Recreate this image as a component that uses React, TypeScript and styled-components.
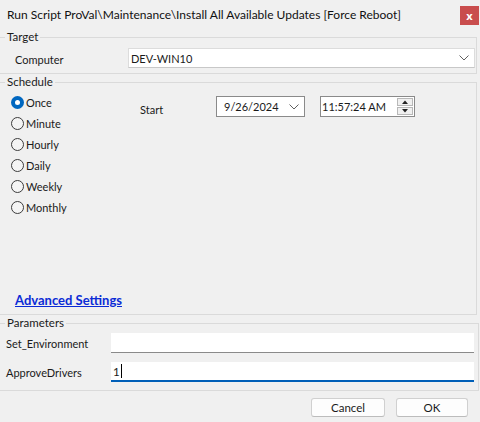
import React from "react";
import styled, { createGlobalStyle } from "styled-components";

const GlobalStyle = createGlobalStyle`
  html, body {
    margin: 0;
    padding: 0;
    background: #f0f0f0;
  }
  * {
    box-sizing: border-box;
  }
`;

const FONT = `Lato, "Noto Sans", sans-serif`;

const Window = styled.div`
  width: 480px;
  height: 422px;
  background: #f0f0f0;
  color: #1a1a1a;
  font-family: ${FONT};
  font-size: 11px;
  display: flex;
  flex-direction: column;
  overflow: hidden;
`;

const TitleBar = styled.div`
  height: 29px;
  display: flex;
  align-items: center;
  justify-content: space-between;
  padding: 0 1px 0 7px;
  font-size: 12px;
  color: #111;
`;

const CloseButton = styled.div`
  width: 19px;
  height: 19px;
  margin-top: 1px;
  background: #c94d4d;
  color: #fff;
  font-family: "Noto Sans", sans-serif;
  font-size: 11px;
  font-weight: 700;
  display: flex;
  align-items: center;
  justify-content: center;
  line-height: 1;
`;

const Group = styled.fieldset<{ $right: number }>`
  margin: 0 ${(p) => p.$right}px 0 0;
  padding: 0;
  border: 1px solid #dadada;
  border-left: none;
  min-width: 0;
`;

const Legend = styled.legend`
  margin-left: 5px;
  padding: 0 2px;
  line-height: 16px;
  font-size: 11.5px;
  color: #1a1a1a;
`;

const TargetBody = styled.div`
  display: flex;
  align-items: center;
  padding: 3px 1px 5px 15px;
`;

const FieldLabel = styled.div<{ $width: number; $offset?: number }>`
  width: ${(p) => p.$width}px;
  flex-shrink: 0;
  padding-top: ${(p) => p.$offset ?? 0}px;
  white-space: nowrap;
`;

const Combo = styled.div`
  flex: 1;
  height: 20px;
  background: #fff;
  border: 1px solid #dcdcdc;
  border-bottom-color: #c8c8c8;
  display: flex;
  align-items: center;
  justify-content: space-between;
  padding: 0 5px 0 2px;
`;

const Chevron = () => (
  <svg width="10" height="6" viewBox="0 0 10 6">
    <polyline points="0.5,0.5 5,5 9.5,0.5" fill="none" stroke="#606060" strokeWidth="1" />
  </svg>
);

const ScheduleBody = styled.div`
  height: 224px;
  display: flex;
  flex-direction: column;
  justify-content: space-between;
  padding: 2px 0 6px 0;
`;

const ScheduleTop = styled.div`
  display: flex;
`;

const RadioList = styled.div`
  width: 140px;
  padding-left: 11px;
  display: flex;
  flex-direction: column;
`;

const RadioRow = styled.div`
  height: 21px;
  display: flex;
  align-items: center;
  gap: 2px;
  font-size: 11px;
`;

const RadioCircle = styled.span<{ $checked: boolean }>`
  width: 13px;
  height: 13px;
  border-radius: 50%;
  flex-shrink: 0;
  border: ${(p) => (p.$checked ? "none" : "1px solid #3c3c3c")};
  background: ${(p) => (p.$checked ? "#0067c0" : "#f4f4f4")};
  display: flex;
  align-items: center;
  justify-content: center;
  &::after {
    content: "";
    display: ${(p) => (p.$checked ? "block" : "none")};
    width: 5px;
    height: 5px;
    border-radius: 50%;
    background: #fff;
  }
`;

const StartArea = styled.div`
  display: flex;
  align-items: flex-start;
  padding-top: 4px;
`;

const PickerBox = styled.div<{ $width: number }>`
  width: ${(p) => p.$width}px;
  height: 21px;
  background: #fff;
  border: 1px solid #8a8a8a;
  display: flex;
  align-items: center;
  justify-content: space-between;
`;

const DateText = styled.span`
  padding-left: 7px;
  font-size: 11px;
`;

const ChevronWrap = styled.span`
  display: flex;
  padding-right: 5px;
`;

const TimeText = styled.span`
  padding-left: 1px;
  font-size: 11px;
`;

const Spinner = styled.div`
  width: 16px;
  height: 17px;
  margin-right: 1px;
  display: flex;
  flex-direction: column;
  gap: 1px;
`;

const SpinButton = styled.div`
  flex: 1;
  background: #f0f0f0;
  border: 1px solid #b8b8b8;
  display: flex;
  align-items: center;
  justify-content: center;
`;

const Arrow = ({ up }: { up?: boolean }) => (
  <svg width="6" height="4" viewBox="0 0 6 4">
    <polygon points={up ? "0,4 6,4 3,0.5" : "0,0 6,0 3,3.5"} fill="#222" />
  </svg>
);

const Gap = styled.div<{ $w: number }>`
  width: ${(p) => p.$w}px;
  flex-shrink: 0;
`;

const LinkRow = styled.div`
  padding-left: 15px;
`;

const AdvancedLink = styled.a`
  color: #0b2bd6;
  font-weight: 700;
  font-size: 13px;
  text-decoration: underline;
  cursor: pointer;
`;

const ParamsBody = styled.div`
  display: flex;
  flex-direction: column;
  gap: 9px;
  padding: 2px 4px 8px 6px;
`;

const ParamRow = styled.div`
  display: flex;
  align-items: center;
`;

const TextInput = styled.div<{ $focused?: boolean }>`
  flex: 1;
  height: 20px;
  background: #fff;
  border-bottom: ${(p) => (p.$focused ? "2px solid #005fb8" : "1px solid #8a8a8a")};
  display: flex;
  align-items: center;
  padding-left: 2px;
  font-size: 11.5px;
`;

const Caret = styled.span`
  display: inline-block;
  width: 1px;
  height: 14px;
  background: #000;
  margin-left: 1px;
`;

const Footer = styled.div`
  display: flex;
  justify-content: flex-end;
  gap: 11px;
  padding: 7px 12px 0 0;
`;

const Button = styled.button<{ $width: number }>`
  width: ${(p) => p.$width}px;
  height: 19px;
  background: #fdfdfd;
  border: 1px solid #d0d0d0;
  border-bottom-color: #bcbcbc;
  border-radius: 3px;
  font-family: ${FONT};
  font-size: 11.5px;
  color: #1a1a1a;
  padding: 0;
  line-height: 1;
`;

const radios = ["Once", "Minute", "Hourly", "Daily", "Weekly", "Monthly"];

export default function App() {
  return (
    <Window>
      <GlobalStyle />
      <TitleBar>
        <span>Run Script ProVal\Maintenance\Install All Available Updates [Force Reboot]</span>
        <CloseButton>x</CloseButton>
      </TitleBar>

      <Group $right={3}>
        <Legend>Target</Legend>
        <TargetBody>
          <FieldLabel $width={113} $offset={2}>Computer</FieldLabel>
          <Combo>
            <span>DEV-WIN10</span>
            <Chevron />
          </Combo>
        </TargetBody>
      </Group>

      <Group $right={3}>
        <Legend>Schedule</Legend>
        <ScheduleBody>
          <ScheduleTop>
            <RadioList>
              {radios.map((r, i) => (
                <RadioRow key={r}>
                  <RadioCircle $checked={i === 0} />
                  <span>{r}</span>
                </RadioRow>
              ))}
            </RadioList>
            <StartArea>
              <FieldLabel $width={76} $offset={7}>Start</FieldLabel>
              <PickerBox $width={89}>
                <DateText>9/26/2024</DateText>
                <ChevronWrap>
                  <Chevron />
                </ChevronWrap>
              </PickerBox>
              <Gap $w={15} />
              <PickerBox $width={95}>
                <TimeText>11:57:24 AM</TimeText>
                <Spinner>
                  <SpinButton>
                    <Arrow up />
                  </SpinButton>
                  <SpinButton>
                    <Arrow />
                  </SpinButton>
                </Spinner>
              </PickerBox>
            </StartArea>
          </ScheduleTop>
          <LinkRow>
            <AdvancedLink>Advanced Settings</AdvancedLink>
          </LinkRow>
        </ScheduleBody>
      </Group>

      <Group $right={1}>
        <Legend>Parameters</Legend>
        <ParamsBody>
          <ParamRow>
            <FieldLabel $width={105}>Set_Environment</FieldLabel>
            <TextInput />
          </ParamRow>
          <ParamRow>
            <FieldLabel $width={105}>ApproveDrivers</FieldLabel>
            <TextInput $focused>
              1<Caret />
            </TextInput>
          </ParamRow>
        </ParamsBody>
      </Group>

      <Footer>
        <Button $width={74}>Cancel</Button>
        <Button $width={72}>OK</Button>
      </Footer>
    </Window>
  );
}
